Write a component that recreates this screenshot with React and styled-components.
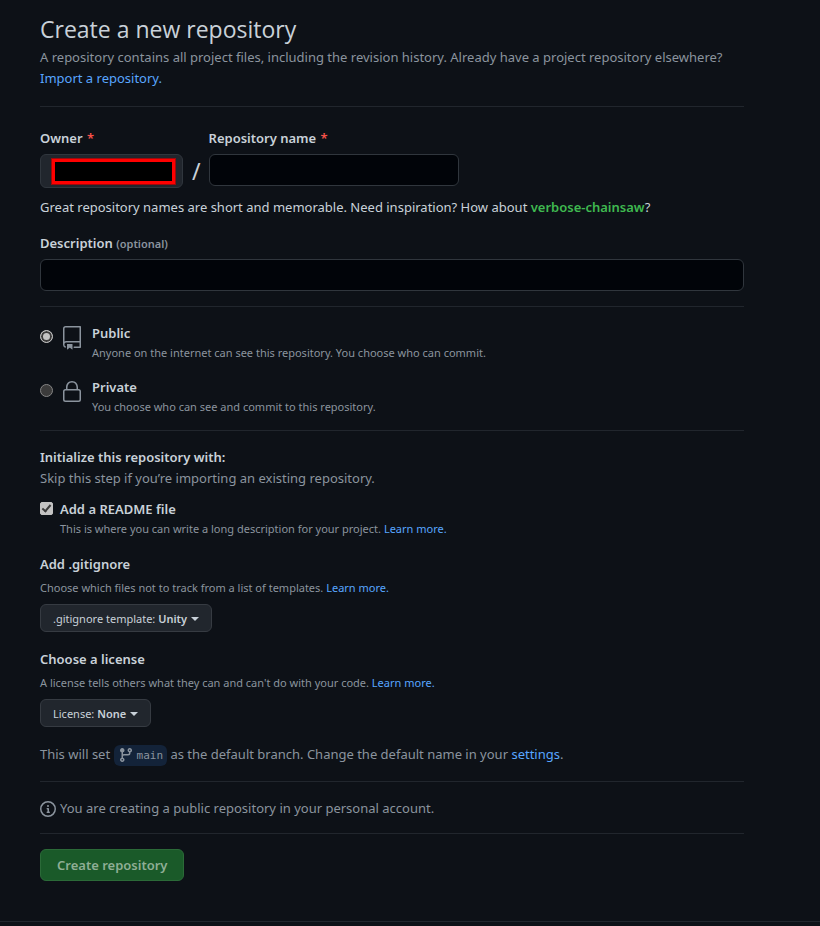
import React, { useState } from "react";
import styled, { createGlobalStyle } from "styled-components";

const suggestion = "verbose-chainsaw";

const visibilities = [
  {
    value: "public",
    title: "Public",
    text: "Anyone on the internet can see this repository. You choose who can commit.",
    Icon: RepoIcon,
  },
  {
    value: "private",
    title: "Private",
    text: "You choose who can see and commit to this repository.",
    Icon: LockIcon,
  },
];

const App = () => {
  const [name, setName] = useState("");
  const [description, setDescription] = useState("");
  const [visibility, setVisibility] = useState("public");
  const [readme, setReadme] = useState(true);

  return (
    <>
      <GlobalStyle />
      <StMain>
        <StHeader>
          <StTitle>Create a new repository</StTitle>
          <StText>
            A repository contains all project files, including the revision
            history. Already have a project repository elsewhere?{" "}
            <StLink href="#import">Import a repository.</StLink>
          </StText>
        </StHeader>

        <form onSubmit={(e) => e.preventDefault()}>
          {/* owner / name */}
          <StSection $pad="21px 0 0">
            <StNameRow>
              <StField>
                <StLabel htmlFor="owner">
                  Owner <StRequired>*</StRequired>
                </StLabel>
                <StOwnerButton id="owner" type="button" aria-haspopup="menu">
                  <StOwnerMask />
                </StOwnerButton>
              </StField>
              <StSlash>/</StSlash>
              <StField>
                <StLabel htmlFor="name">
                  Repository name <StRequired>*</StRequired>
                </StLabel>
                <StInput
                  id="name"
                  $width="250px"
                  value={name}
                  onChange={(e) => setName(e.target.value)}
                />
              </StField>
            </StNameRow>
            <StHint>
              Great repository names are short and memorable. Need inspiration?
              How about{" "}
              <StSuggestion type="button" onClick={() => setName(suggestion)}>
                {suggestion}
              </StSuggestion>
              ?
            </StHint>
            <StField>
              <StLabel htmlFor="description">
                Description <StOptional>(optional)</StOptional>
              </StLabel>
              <StInput
                id="description"
                $width="100%"
                value={description}
                onChange={(e) => setDescription(e.target.value)}
              />
            </StField>
          </StSection>

          {/* visibility */}
          <StSection $pad="16px 0 14px" $top="15px">
            <StRadioList>
              {visibilities.map(({ value, title, text, Icon }) => (
                <StRadioRow key={value}>
                  <StRadio
                    name="visibility"
                    value={value}
                    checked={visibility === value}
                    onChange={() => setVisibility(value)}
                  />
                  <Icon />
                  <span>
                    <StStrong>{title}</StStrong>
                    <StNote>{text}</StNote>
                  </span>
                </StRadioRow>
              ))}
            </StRadioList>
          </StSection>

          {/* initial files */}
          <StSection $pad="16px 0 15px">
            <StHeading>Initialize this repository with:</StHeading>
            <StText>Skip this step if you’re importing an existing repository.</StText>

            <StCheckRow>
              <StCheckbox
                id="readme"
                checked={readme}
                onChange={(e) => setReadme(e.target.checked)}
              />
              <div>
                <StCheckLabel htmlFor="readme">Add a README file</StCheckLabel>
                <StNote>
                  This is where you can write a long description for your
                  project. <StLink href="#readme">Learn more.</StLink>
                </StNote>
              </div>
            </StCheckRow>

            <StGroup>
              <StHeading>Add .gitignore</StHeading>
              <StNote>
                Choose which files not to track from a list of templates.{" "}
                <StLink href="#gitignore">Learn more.</StLink>
              </StNote>
              <StMenuButton type="button" aria-haspopup="menu">
                <span>.gitignore template: <b>Unity</b></span>
                <StCaret />
              </StMenuButton>
            </StGroup>

            <StGroup>
              <StHeading>Choose a license</StHeading>
              <StNote>
                A license tells others what they can and can't do with your
                code. <StLink href="#license">Learn more.</StLink>
              </StNote>
              <StMenuButton type="button" aria-haspopup="menu">
                <span>License: <b>None</b></span>
                <StCaret />
              </StMenuButton>
            </StGroup>

            <StBranchText>
              This will set{" "}
              <StBranch>
                <BranchIcon />
                main
              </StBranch>{" "}
              as the default branch. Change the default name in your{" "}
              <StLink href="#settings">settings</StLink>.
            </StBranchText>
          </StSection>

          <StSection $pad="16px 0 14px">
            <StInfo>
              <InfoIcon />
              You are creating a public repository in your personal account.
            </StInfo>
          </StSection>

          <StSection $pad="15px 0 40px">
            <StSubmit type="submit" disabled={!name}>
              Create repository
            </StSubmit>
          </StSection>
        </form>
      </StMain>
      <StFooter />
    </>
  );
};

export default App;

function RepoIcon() {
  return (
    <StIcon width="24" height="24" viewBox="0 0 24 24">
      <path d="M3 2.75A2.75 2.75 0 0 1 5.75 0h14.5a.75.75 0 0 1 .75.75v20.5a.75.75 0 0 1-.75.75h-6a.75.75 0 0 1 0-1.5h5.25v-4H6A1.5 1.5 0 0 0 4.5 18v.75c0 .716.43 1.334 1.05 1.605a.75.75 0 0 1-.6 1.374A3.251 3.251 0 0 1 3 18.75ZM19.5 1.5H5.75c-.69 0-1.25.56-1.25 1.25v12.651A2.989 2.989 0 0 1 6 15h13.5Z" />
      <path d="M7 18.25a.25.25 0 0 1 .25-.25h5a.25.25 0 0 1 .25.25v5.01a.25.25 0 0 1-.397.201l-2.206-1.604a.25.25 0 0 0-.294 0L7.397 23.46a.25.25 0 0 1-.397-.2v-5.01Z" />
    </StIcon>
  );
}

function LockIcon() {
  return (
    <StIcon width="24" height="24" viewBox="0 0 24 24">
      <path d="M6 9V7.25C6 3.845 8.503 1 12 1s6 2.845 6 6.25V9h.5a2.5 2.5 0 0 1 2.5 2.5v8a2.5 2.5 0 0 1-2.5 2.5h-13A2.5 2.5 0 0 1 3 19.5v-8A2.5 2.5 0 0 1 5.5 9Zm-1.5 2.5v8a1 1 0 0 0 1 1h13a1 1 0 0 0 1-1v-8a1 1 0 0 0-1-1h-13a1 1 0 0 0-1 1Zm3-4.25V9h9V7.25c0-2.67-1.922-4.75-4.5-4.75-2.578 0-4.5 2.08-4.5 4.75Z" />
    </StIcon>
  );
}

function BranchIcon() {
  return (
    <StIcon width="16" height="16" viewBox="0 0 16 16">
      <path d="M11.75 2.5a.75.75 0 100 1.5.75.75 0 000-1.5zm-2.25.75a2.25 2.25 0 113 2.122V6A2.5 2.5 0 0110 8.5H6a1 1 0 00-1 1v1.128a2.251 2.251 0 11-1.5 0V5.372a2.25 2.25 0 111.5 0v1.836A2.492 2.492 0 016 7h4a1 1 0 001-1v-.628A2.25 2.25 0 019.5 3.25zM4.25 12a.75.75 0 100 1.5.75.75 0 000-1.5zM3.5 3.25a.75.75 0 111.5 0 .75.75 0 01-1.5 0z" />
    </StIcon>
  );
}

function InfoIcon() {
  return (
    <StIcon width="16" height="16" viewBox="0 0 16 16">
      <path d="M8 1.5a6.5 6.5 0 100 13 6.5 6.5 0 000-13zM0 8a8 8 0 1116 0A8 8 0 010 8zm6.5-.25A.75.75 0 017.25 7h1a.75.75 0 01.75.75v2.75h.25a.75.75 0 010 1.5h-2a.75.75 0 010-1.5h.25v-2h-.25a.75.75 0 01-.75-.75zM8 6a1 1 0 100-2 1 1 0 000 2z" />
    </StIcon>
  );
}

const GlobalStyle = createGlobalStyle`
  *, *::before, *::after {
    box-sizing: border-box;
  }
  body {
    margin: 0;
    background: #0d1117;
    color: #c9d1d9;
    font-family: "Noto Sans", "Open Sans", sans-serif;
    font-size: 13px;
    line-height: 21px;
  }
  button, input {
    font: inherit;
    color: inherit;
  }
  b {
    font-weight: 600;
  }
`;

const StMain = styled.main`
  max-width: 820px;
  padding: 12px 76px 0 40px;
`;

const StHeader = styled.header`
  padding-bottom: 17px;
`;

const StTitle = styled.h1`
  margin: 0;
  font-family: "Open Sans", "Noto Sans", sans-serif;
  font-size: 23px;
  font-weight: 400;
  line-height: 35px;
`;

const StText = styled.p`
  margin: 0;
  color: #8b949e;
`;

const StLink = styled.a`
  color: #58a6ff;
  text-decoration: none;
  &:hover {
    text-decoration: underline;
  }
`;

const StSection = styled.section`
  margin-top: ${(props) => props.$top || "0"};
  padding: ${(props) => props.$pad};
  border-top: 1px solid #21262d;
`;

const StNameRow = styled.div`
  display: flex;
  align-items: flex-start;
`;

const StField = styled.div`
  display: flex;
  flex-direction: column;
  gap: 5px;
`;

const StLabel = styled.label`
  font-weight: 600;
`;

const StRequired = styled.span`
  margin-left: 1px;
  color: #f85149;
`;

const StOptional = styled.span`
  color: #8b949e;
  font-size: 11px;
`;

const StOwnerButton = styled.button`
  display: flex;
  width: 143px;
  height: 34px;
  padding: 3px 6px 2px 10px;
  border: 1px solid #30363d;
  border-radius: 6px;
  background: #21262d;
`;

/* hides the account name */
const StOwnerMask = styled.span`
  flex: 1;
  align-self: stretch;
  border: 1px solid #9c0a0c;
  background: #000000;
  box-shadow: inset 0 0 0 3px #ff0000;
`;

const StSlash = styled.span`
  padding: 27px 8px 0 9px;
  font-size: 23px;
  line-height: 32px;
`;

const StInput = styled.input.attrs({ type: "text" })`
  width: ${(props) => props.$width};
  height: 32px;
  padding: 5px 12px;
  border: 1px solid #30363d;
  border-radius: 6px;
  background: #010409;
  outline: none;
  &:focus {
    border-color: #58a6ff;
  }
`;

const StHint = styled.p`
  margin: 9px 0 15px;
`;

const StSuggestion = styled.button`
  padding: 0;
  border: none;
  background: none;
  color: #3fb950;
  font-weight: 600;
  cursor: pointer;
`;

const StRadioList = styled.div`
  display: flex;
  flex-direction: column;
  gap: 15px;
`;

const StRadioRow = styled.label`
  display: flex;
  align-items: flex-start;
  > svg {
    margin: 3px 8px 0 7px;
  }
`;

const StRadio = styled.input.attrs({ type: "radio" })`
  appearance: none;
  flex: none;
  width: 13px;
  height: 13px;
  margin: 7px 0 0;
  border: 1px solid #858585;
  border-radius: 50%;
  background: #3b3b3b;
  &:checked {
    border-color: #c3c3c3;
    background: #c3c3c3;
    box-shadow: inset 0 0 0 2px #3b3b3b;
  }
`;

const StStrong = styled.span`
  display: block;
  font-weight: 600;
`;

const StHeading = styled.h2`
  margin: 0;
  font-size: 13px;
  font-weight: 600;
`;

const StNote = styled.span`
  display: block;
  color: #8b949e;
  font-size: 11px;
  line-height: 18px;
`;

const StCheckRow = styled.div`
  display: flex;
  align-items: flex-start;
  gap: 7px;
  margin-top: 10px;
`;

const StCheckbox = styled.input.attrs({ type: "checkbox" })`
  appearance: none;
  display: grid;
  place-items: center;
  flex: none;
  width: 13px;
  height: 13px;
  margin: 3px 0 0;
  border: 1px solid #858585;
  border-radius: 2px;
  background: #3b3b3b;
  &:checked {
    border-color: #c3c3c3;
    background: #c3c3c3;
  }
  &:checked::after {
    content: "";
    width: 5px;
    height: 9px;
    margin-bottom: 2px;
    border: solid #3b3b3b;
    border-width: 0 2px 2px 0;
    transform: rotate(40deg);
  }
`;

const StCheckLabel = styled.label`
  display: block;
  font-weight: 600;
`;

const StGroup = styled.div`
  margin-top: 16px;
  padding-bottom: 1px;
  ${StNote} {
    margin: 4px 0 7px;
  }
`;

const StMenuButton = styled.button`
  display: inline-flex;
  align-items: center;
  gap: 4px;
  height: 28px;
  padding: 0 12px;
  border: 1px solid #363b42;
  border-radius: 6px;
  background: #21262d;
  font-size: 11px;
  cursor: pointer;
`;

const StCaret = styled.span`
  margin-top: 1px;
  border: 4px solid transparent;
  border-top-color: currentColor;
  border-bottom: 0;
`;

const StBranchText = styled(StText)`
  margin-top: 16px;
`;

const StBranch = styled.span`
  display: inline-flex;
  align-items: center;
  gap: 3px;
  height: 21px;
  padding: 0 4px;
  border-radius: 6px;
  background: #132339;
  font-family: "DejaVu Sans Mono", monospace;
  font-size: 11px;
  vertical-align: middle;
  > svg {
    margin-bottom: 2px;
  }
`;

const StInfo = styled.p`
  display: flex;
  align-items: center;
  gap: 4px;
  margin: 0;
  color: #8b949e;
`;

const StSubmit = styled.button`
  height: 32px;
  padding: 0 16px;
  border: 1px solid #2ea043;
  border-radius: 6px;
  background: #238636;
  color: #ffffff;
  font-weight: 600;
  cursor: pointer;
  &:disabled {
    border-color: #2b6a38;
    background: #1a5a29;
    color: #8fae95;
    cursor: default;
  }
`;

const StFooter = styled.footer`
  border-top: 1px solid #21262d;
`;

const StIcon = styled.svg`
  flex: none;
  fill: #8b949e;
`;
